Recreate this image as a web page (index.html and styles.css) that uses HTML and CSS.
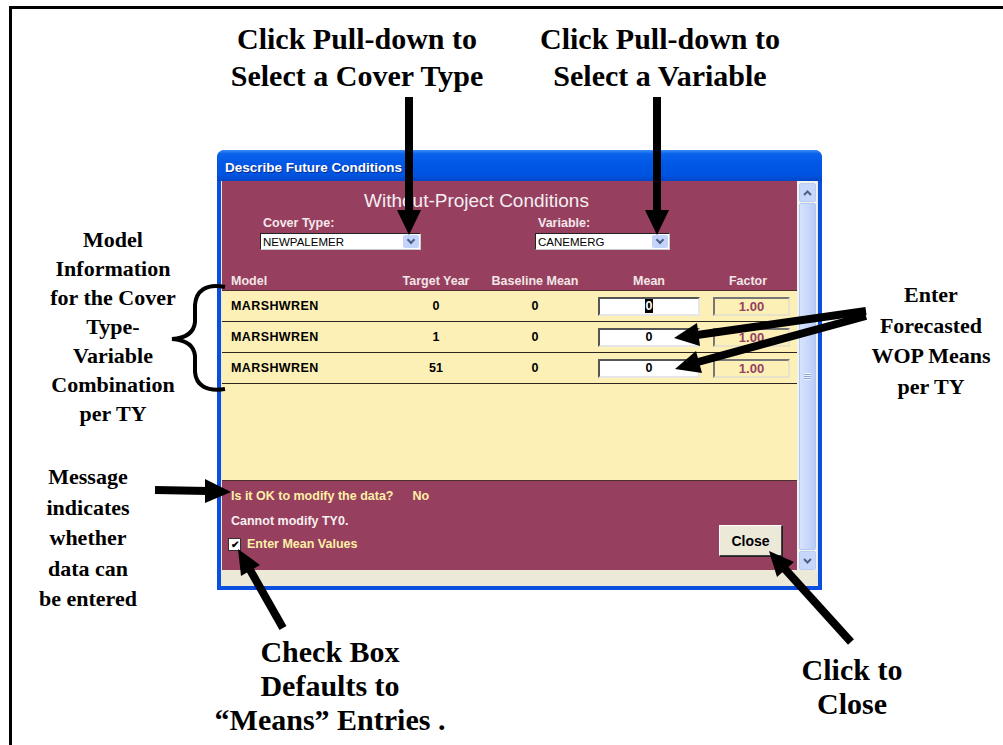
FILE: index.html
```html
<!DOCTYPE html>
<html lang="en">
<head>
  <meta charset="UTF-8">
  <title>Describe Future Conditions – Callouts</title>
  <link rel="stylesheet" href="styles.css">
</head>
<body>
  <div class="page">
    <div class="frame"></div>

    <div class="note big note-cover">Click Pull-down to<br>Select a Cover Type</div>
    <div class="note big note-var">Click Pull-down to<br>Select a Variable</div>
    <div class="note side note-model">Model<br>Information<br>for the Cover<br>Type-<br>Variable<br>Combination<br>per TY</div>
    <div class="note side note-msg">Message<br>indicates<br>whether<br>data can<br>be entered</div>
    <div class="note side note-enter">Enter<br>Forecasted<br>WOP Means<br>per TY</div>
    <div class="note big note-check">Check Box<br>Defaults to<br>&ldquo;Means&rdquo; Entries .</div>
    <div class="note big note-close">Click to<br>Close</div>

    <div class="win">
      <div class="titlebar">Describe Future Conditions</div>
      <div class="client">
        <div class="main">
          <div class="form">
            <h1>Without-Project Conditions</h1>
            <div class="pickers">
              <div class="picker picker-cover">
                <label>Cover Type:</label>
                <div class="combo"><span>NEWPALEMER</span><i class="drop"></i></div>
              </div>
              <div class="picker picker-var">
                <label>Variable:</label>
                <div class="combo"><span>CANEMERG</span><i class="drop"></i></div>
              </div>
            </div>

            <div class="grid head">
              <div class="c-model">Model</div>
              <div class="c-mid">Target Year</div>
              <div class="c-mid">Baseline Mean</div>
              <div class="c-mid">Mean</div>
              <div class="c-mid c-factor">Factor</div>
            </div>

            <div class="rows">
              <div class="grid row">
                <div class="c-model name">MARSHWREN</div>
                <div class="c-mid">0</div>
                <div class="c-mid">0</div>
                <div class="c-box"><div class="field"><span class="sel">0</span></div></div>
                <div class="c-factor"><div class="factor">1.00</div></div>
              </div>
              <div class="grid row">
                <div class="c-model name">MARSHWREN</div>
                <div class="c-mid">1</div>
                <div class="c-mid">0</div>
                <div class="c-box"><div class="field">0</div></div>
                <div class="c-factor"><div class="factor">1.00</div></div>
              </div>
              <div class="grid row">
                <div class="c-model name">MARSHWREN</div>
                <div class="c-mid">51</div>
                <div class="c-mid">0</div>
                <div class="c-box"><div class="field">0</div></div>
                <div class="c-factor"><div class="factor">1.00</div></div>
              </div>
            </div>

            <div class="status">
              <div class="msgs">
                <div class="ask">Is it OK to modify the data?<span class="answer">No</span></div>
                <div class="warn">Cannot modify TY0.</div>
                <div class="check"><span class="box">&#10004;</span>Enter Mean Values</div>
              </div>
              <button class="close">Close</button>
            </div>
          </div>

          <div class="scroll">
            <div class="sbtn up"><svg width="9" height="6" viewBox="0 0 9 6"><path d="M1 5 L4.5 1.5 L8 5" fill="none" stroke="#4d6185" stroke-width="2"/></svg></div>
            <div class="thumb"><span class="grip"></span></div>
            <div class="sbtn down"><svg width="9" height="6" viewBox="0 0 9 6"><path d="M1 1 L4.5 4.5 L8 1" fill="none" stroke="#4d6185" stroke-width="2"/></svg></div>
          </div>
        </div>
        <div class="footer"></div>
      </div>
    </div>

    <svg class="marks" width="1003" height="745" viewBox="0 0 1003 745">
      <g stroke="#000" stroke-width="8" fill="none">
        <line x1="409" y1="97" x2="409" y2="214"/>
        <line x1="657" y1="97" x2="657" y2="214"/>
        <line x1="155" y1="490" x2="208" y2="491"/>
        <line x1="866" y1="311" x2="697" y2="335"/>
        <line x1="866" y1="316" x2="698" y2="362"/>
        <line x1="283" y1="628" x2="249" y2="568"/>
        <line x1="851" y1="642" x2="784" y2="568"/>
      </g>
      <g fill="#000">
        <polygon points="397,210 421,210 409,235"/>
        <polygon points="645,210 669,210 657,235"/>
        <polygon points="205,479 205,503 231,492"/>
        <polygon points="700,346 697,323 674,338"/>
        <polygon points="702,373 696,351 675,369"/>
        <polygon points="260,565 241,576 238,549"/>
        <polygon points="794,562 777,577 769,551"/>
      </g>
      <path d="M225 287 C206 283 196 291 195 305 L195 322 C194 333 186 338 172 339 C186 340 194 345 195 356 L195 372 C196 385 206 392 225 389" fill="none" stroke="#000" stroke-width="4"/>
    </svg>
  </div>
</body>
</html>
```

FILE: styles.css
```css
body {
  margin: 0;
  background-color: #fff;
  font-family: 'Liberation Sans', Arial, sans-serif;
}

.page {
  position: relative;
  width: 1003px;
  height: 745px;
  overflow: hidden;
}

.frame {
  position: absolute;
  left: 9px;
  top: 6px;
  right: -20px;
  bottom: -20px;
  border-left: 3px solid #000;
  border-top: 3px solid #000;
}

/* callout text */
.note {
  position: absolute;
  text-align: center;
  font-family: 'Liberation Serif', 'Times New Roman', serif;
  font-weight: bold;
  color: #000;
}

.big {
  font-size: 30px;
  line-height: 37px;
}

.side {
  font-size: 22px;
  line-height: 29px;
}

.note-cover { left: 207px; top: 20px; width: 300px; }
.note-var { left: 510px; top: 20px; width: 300px; }
.note-model { left: 13px; top: 225px; width: 200px; }
.note-msg { left: 3px; top: 462px; width: 170px; line-height: 30.5px; }
.note-enter { left: 861px; top: 280px; width: 140px; line-height: 30.5px; }
.note-check { left: 180px; top: 635px; width: 300px; line-height: 34px; }
.note-close { left: 752px; top: 653px; width: 200px; line-height: 34px; }

.marks {
  position: absolute;
  left: 0;
  top: 0;
  pointer-events: none;
}

/* the dialog window */
.win {
  position: absolute;
  left: 217px;
  top: 150px;
  width: 597px;
  border: 4px solid #0a4fe0;
  border-top: none;
  border-radius: 8px 8px 0 0;
  background-color: #0a4fe0;
}

.titlebar {
  height: 31px;
  margin: 0 -4px;
  padding-left: 8px;
  border-radius: 7px 7px 0 0;
  background: linear-gradient(#3c8ef8 0%, #0b62ea 12%, #0057e6 45%, #0054e1 80%, #0046c8 100%);
  color: #fff;
  font-size: 13.5px;
  font-weight: bold;
  line-height: 36px;
  text-shadow: 1px 1px 0 #0a2d8a;
}

.client {
  background-color: #ece9d8;
  padding: 0 1px;
}

.main {
  display: flex;
  height: 389px;
}

.form {
  width: 575px;
  display: flex;
  flex-direction: column;
  background-color: #973f5f;
}

h1 {
  margin: 10px 0 0;
  padding-left: 142px;
  font-size: 19px;
  font-weight: normal;
  line-height: 20px;
  color: #f3eef0;
}

.pickers {
  display: flex;
  gap: 114px;
  padding-left: 38px;
  margin-top: 6px;
}

.picker label {
  display: block;
  padding-left: 3px;
  font-size: 12.5px;
  font-weight: bold;
  line-height: 12px;
  color: #f4e8ec;
}

.combo {
  display: flex;
  align-items: center;
  justify-content: space-between;
  height: 17px;
  margin-top: 4px;
  box-sizing: border-box;
  border: 1px solid #222;
  border-right-color: #ccc;
  border-bottom-color: #ccc;
  background-color: #fff;
  padding-left: 2px;
  font-size: 11.5px;
  color: #000;
}

.picker-cover .combo { width: 161px; }
.picker-var .combo { width: 135px; }

.drop {
  width: 16px;
  height: 13px;
  margin-right: 1px;
  border-radius: 2px;
  background-color: #c3d3fb;
  position: relative;
}

.drop::after {
  content: "";
  position: absolute;
  left: 5px;
  top: 2px;
  width: 4px;
  height: 4px;
  border-right: 2px solid #4d6185;
  border-bottom: 2px solid #4d6185;
  transform: rotate(45deg);
}

.grid {
  display: grid;
  grid-template-columns: 176px 76px 122px 104px 97px;
  align-items: center;
}

.head {
  height: 18px;
  margin-top: 22px;
  font-size: 12.5px;
  font-weight: bold;
  color: #f2e6e6;
}

.c-model { padding-left: 9px; }
.c-mid { text-align: center; }
.head .c-mid:nth-child(4) { padding-left: 2px; }
.head .c-factor { padding-left: 13px; text-align: center; margin-right: 7px; }

.rows {
  flex: none;
  height: 189px;
  background-color: #fdf0b6;
  border-top: 1px solid #4a3030;
  border-bottom: 1px solid #4a3030;
}

.row {
  height: 30px;
  border-bottom: 1px solid #2e2420;
  font-size: 12.5px;
  font-weight: bold;
  color: #000;
}

.name { letter-spacing: 0.4px; }

.c-box { padding-left: 2px; }

.field {
  height: 19px;
  box-sizing: border-box;
  border: 2px solid #222;
  border-top-color: #555;
  border-left-color: #555;
  border-right-color: #e6e6e6;
  border-bottom-color: #e6e6e6;
  background-color: #fff;
  text-align: center;
  line-height: 15px;
}

.sel {
  background-color: #000;
  color: #fff;
  padding: 0 1px;
}

.c-factor { padding-left: 13px; padding-right: 7px; }

.factor {
  height: 19px;
  box-sizing: border-box;
  border: 2px solid #777;
  border-right-color: #e8e2c8;
  border-bottom-color: #e8e2c8;
  text-align: center;
  line-height: 15px;
  font-size: 13px;
  color: #96405e;
}

.status {
  flex: 1;
  display: flex;
  justify-content: space-between;
  padding: 8px 15px 0 9px;
  font-size: 12.5px;
  font-weight: bold;
}

.msgs {
  display: flex;
  flex-direction: column;
}

.ask {
  line-height: 14px;
  color: #fcefa6;
}

.answer { margin-left: 19px; }

.warn {
  margin-top: 11px;
  line-height: 14px;
  color: #f6f0f0;
}

.check {
  display: flex;
  align-items: center;
  margin-top: 9px;
  margin-left: -3px;
  line-height: 14px;
  color: #fcefa6;
}

.box {
  width: 11px;
  height: 11px;
  margin-right: 6px;
  border: 1px solid #333;
  background-color: #fff;
  color: #000;
  font-size: 10px;
  line-height: 11px;
  text-align: center;
}

.close {
  align-self: flex-start;
  margin-top: 36px;
  width: 63px;
  height: 31px;
  border: 1px solid #fff;
  border-right-color: #444;
  border-bottom-color: #444;
  background-color: #ece9d8;
  font-family: 'Liberation Sans', Arial, sans-serif;
  font-size: 14px;
  font-weight: bold;
  color: #000;
  box-shadow: 1px 1px 0 #222;
}

.scroll {
  width: 20px;
  display: flex;
  flex-direction: column;
  align-items: center;
  padding-top: 2px;
  background-color: #f3f3ee;
}

.sbtn {
  width: 17px;
  height: 19px;
  box-sizing: border-box;
  border: 1px solid #b9ccf4;
  border-radius: 2px;
  background-color: #c7d6fb;
  display: flex;
  align-items: center;
  justify-content: center;
}

.thumb {
  flex: 1;
  width: 17px;
  box-sizing: border-box;
  margin: 1px 0;
  border: 1px solid #b2c6f2;
  border-radius: 2px;
  background: linear-gradient(90deg, #d7e3fd, #c6d6fb 60%, #b9cbf6);
  display: flex;
  align-items: center;
  justify-content: center;
}

.grip {
  width: 7px;
  height: 7px;
  background: repeating-linear-gradient(#eef3ff 0 1px, #8ea5d8 1px 2px);
}

.footer {
  height: 16px;
}
```
